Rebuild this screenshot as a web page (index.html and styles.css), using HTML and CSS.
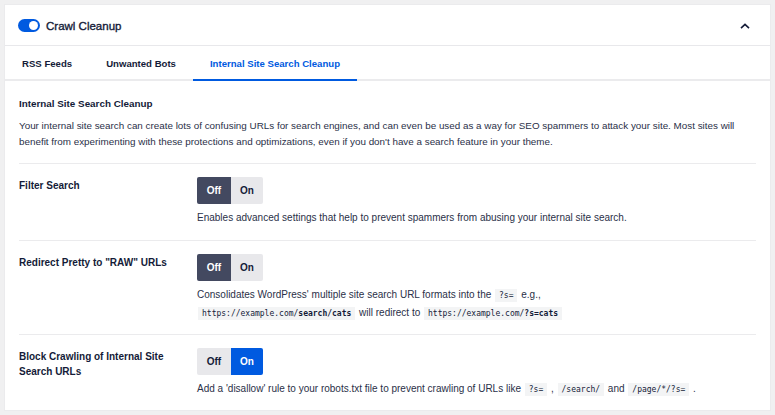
FILE: index.html
```html
<!DOCTYPE html>
<html lang="en">
<head>
  <meta charset="UTF-8" />
  <title>Crawl Cleanup</title>
  <link rel="stylesheet" href="styles.css">
</head>
<body>
  <div class="card">
    <div class="card-header">
      <span class="switch"><span class="knob"></span></span>
      <span class="card-title">Crawl Cleanup</span>
      <svg class="chevron" width="10" height="6" viewBox="0 0 10 6">
        <path d="M1 5.2 L5 1.4 L9 5.2" fill="none" stroke="#141b38" stroke-width="1.6"/>
      </svg>
    </div>

    <div class="tabs">
      <div class="tab">RSS Feeds</div>
      <div class="tab">Unwanted Bots</div>
      <div class="tab active">Internal Site Search Cleanup</div>
    </div>

    <div class="content">
      <div class="intro">
        <div class="section-title">Internal Site Search Cleanup</div>
        <p>Your internal site search can create lots of confusing URLs for search engines, and can even be used as a way for SEO spammers to attack your site. Most sites will benefit from experimenting with these protections and optimizations, even if you don't have a search feature in your theme.</p>
      </div>

      <div class="row">
        <div class="label">Filter Search</div>
        <div class="control">
          <div class="segment">
            <span class="seg off selected">Off</span>
            <span class="seg on">On</span>
          </div>
          <div class="desc">Enables advanced settings that help to prevent spammers from abusing your internal site search.</div>
        </div>
      </div>

      <div class="row short">
        <div class="label">Redirect Pretty to "RAW" URLs</div>
        <div class="control">
          <div class="segment">
            <span class="seg off selected">Off</span>
            <span class="seg on">On</span>
          </div>
          <div class="desc tall">Consolidates WordPress' multiple site search URL formats into the <code>?s=</code> e.g.,<br><code>https://example.com/<b>search/cats</b></code> will redirect to <code>https://example.com/<b>?s=cats</b></code></div>
        </div>
      </div>

      <div class="row last">
        <div class="label">Block Crawling of Internal Site Search URLs</div>
        <div class="control">
          <div class="segment">
            <span class="seg off">Off</span>
            <span class="seg on active">On</span>
          </div>
          <div class="desc">Add a 'disallow' rule to your robots.txt file to prevent crawling of URLs like <code>?s=</code> , <code>/search/</code> and <code>/page/*/?s=</code> .</div>
        </div>
      </div>
    </div>
  </div>
</body>
</html>
```

FILE: styles.css
```css
body {
  margin: 0;
  padding: 5px;
  background-color: #f0f0f1;
  font-family: "Liberation Sans", Arial, sans-serif;
  color: #141b38;
}

.card {
  background-color: #ffffff;
  width: 765px;
  height: 405px;
  box-shadow: 0 0 0 1px #ebebed;
}

.card-header {
  height: 41px;
  padding: 1px 18px 0 13px;
  box-sizing: border-box;
  display: flex;
  align-items: center;
  border-bottom: 1px solid #e8e8eb;
}

.switch {
  width: 22px;
  height: 13px;
  border-radius: 7px;
  background-color: #005ae0;
  position: relative;
  margin-right: 6px;
}

.knob {
  position: absolute;
  right: 2px;
  top: 2px;
  width: 9px;
  height: 9px;
  border-radius: 50%;
  background-color: #ffffff;
}

.card-title {
  font-size: 11.5px;
  -webkit-text-stroke: 0.35px #141b38;
}

.chevron {
  margin-left: auto;
  margin-right: 2px;
}

.tabs {
  display: flex;
  height: 35px;
  box-sizing: border-box;
  padding-top: 1px;
  border-bottom: 2px solid #ebebed;
}

.tab {
  padding: 0 17px;
  font-size: 9.6px;
  font-weight: 700;
  display: flex;
  align-items: center;
  margin-bottom: -2px;
  border-bottom: 2px solid transparent;
}

.tab.active {
  color: #005ae0;
  border-bottom-color: #005ae0;
}

.content {
  padding: 0 14px;
}

.intro {
  padding: 15px 0 13px;
  border-bottom: 1px solid #ebebed;
  font-size: 9.85px;
}

.section-title {
  font-weight: 700;
  line-height: 16px;
}

.intro p {
  margin: 6px 0 0;
  line-height: 16px;
  color: #2a3048;
}

.row {
  display: flex;
  padding: 13px 0 14px;
  border-bottom: 1px solid #ebebed;
}

.row.short {
  padding-bottom: 12px;
}

.row.last {
  border-bottom: none;
}

.label {
  width: 178px;
  flex-shrink: 0;
  font-size: 10px;
  font-weight: 700;
  line-height: 15px;
  padding-top: 1px;
  box-sizing: border-box;
  padding-right: 20px;
}

.segment {
  display: flex;
}

.seg {
  height: 27px;
  display: flex;
  align-items: center;
  justify-content: center;
  font-size: 10px;
  font-weight: 700;
  background-color: #e8e8eb;
  color: #141b38;
}

.seg.off {
  width: 34px;
  border-radius: 2px 0 0 2px;
}

.seg.on {
  width: 32px;
  border-radius: 0 2px 2px 0;
}

.seg.selected {
  background-color: #434960;
  color: #ffffff;
}

.seg.active {
  background-color: #005ae0;
  color: #ffffff;
}

.desc {
  margin-top: 5px;
  padding-top: 1px;
  font-size: 10px;
  line-height: 16px;
  color: #2a3048;
}

.desc.tall {
  padding-top: 0;
  line-height: 17px;
}

code {
  font-family: "DejaVu Sans Mono", monospace;
  font-size: 8px;
  color: #141b38;
  background-color: #f3f4f5;
  padding: 2px 4px;
  margin: 0 1px;
}
```
